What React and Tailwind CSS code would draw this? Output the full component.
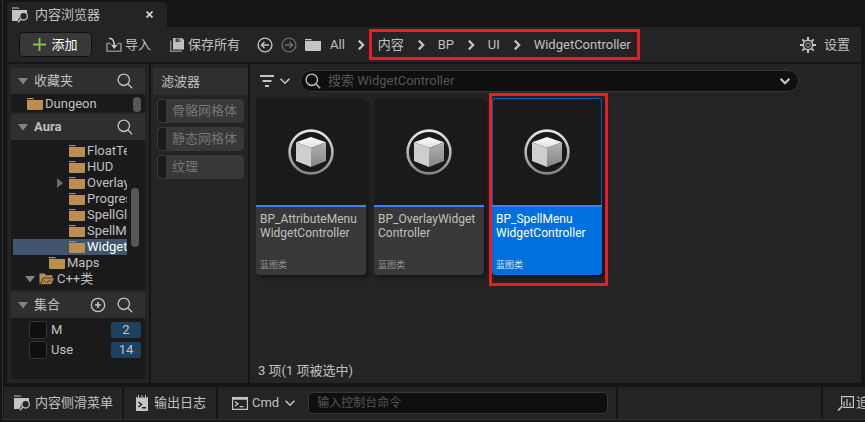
import React from "react";

const FONT =
  "font-['Roboto','Noto_Sans_CJK_SC',sans-serif] text-[13px] leading-4 text-[#c0c0c0]";

function Search({ className = "" }) {
  return (
    <svg className={`size-4 shrink-0 ${className}`} viewBox="0 0 16 16" fill="none" stroke="#c4c4c4" strokeWidth="1.3" aria-hidden="true">
      <circle cx="6.8" cy="6.8" r="5.7" />
      <path d="M11 11l4.2 4.2" />
    </svg>
  );
}

function BrowserIcon() {
  return (
    <svg className="h-4 w-[17px] shrink-0" viewBox="0 0 17 16" aria-hidden="true">
      <path d="M0 0h6l2 2H0z" fill="#777" />
      <path d="M0 3h15v3.6H11A4.4 4.4 0 0 0 7 11l-1.5 3H0z" fill="#c4c4c4" />
      <circle cx="11.6" cy="9.2" r="3.8" fill="#242424" stroke="#c4c4c4" strokeWidth="1.3" />
      <path d="M8.8 12L6 15.2" stroke="#c4c4c4" strokeWidth="1.4" />
    </svg>
  );
}

function ImportIcon() {
  return (
    <svg className="size-4 shrink-0" viewBox="0 0 16 16" fill="none" aria-hidden="true">
      <path d="M4.5 6.5H1V14.3h14V6.5h-3.5" stroke="#858585" strokeWidth="1.6" />
      <path d="M3.2 1.2C7 1.2 8.3 3.5 8.3 9.5" stroke="#d0d0d0" strokeWidth="1.6" />
      <path d="M4.8 7.2L8.3 12l3.5-4.8-3.5 1.4z" fill="#d0d0d0" />
    </svg>
  );
}

function SaveIcon() {
  return (
    <svg className="size-[14px] shrink-0" viewBox="0 0 14 14" aria-hidden="true">
      <path d="M.7 2.5v10.8H12" fill="none" stroke="#858585" strokeWidth="1.4" />
      <path d="M3 0h9l2 2v9.5H3z" fill="#c0c0c0" />
      <path d="M5.5 0.5h5v3.4h-5z" fill="#444" />
      <path d="M8.8 1h1v2.2h-1z" fill="#c0c0c0" />
    </svg>
  );
}

function ArrowCircle({ flip, color }) {
  return (
    <svg className={`size-4 ${flip ? "-scale-x-100" : ""}`} viewBox="0 0 16 16" fill="none" stroke={color} strokeWidth="1.4" aria-hidden="true">
      <circle cx="8" cy="8" r="6.9" />
      <path d="M12 8H5M7.5 5L4.5 8l3 3" strokeWidth="1.5" />
    </svg>
  );
}

function Folder({ color = "#b98e50" }) {
  return (
    <svg className="h-3 w-4 shrink-0" viewBox="0 0 16 12" fill={color} aria-hidden="true">
      <path d="M0 0h6l1.3 1.2H0zM0 2h16v9.3L15.3 12H.7L0 11.3z" />
    </svg>
  );
}

function OpenFolder() {
  return (
    <svg className="h-3 w-4 shrink-0" viewBox="0 0 16 12" aria-hidden="true">
      <path d="M.5 11.5V.5h5l1.5 1.8h6.5v3.2H4L1 11.5z" fill="#b98e50" />
      <path d="M1.2 11.5L4.2 5h11.3l-3.2 6.5z" fill="#b98e50" stroke="#1a1a1a" strokeWidth=".7" />
      <path d="M4 10l2-3.3M6 9.7l5-2.6M8 10.2l4.5-2.8" stroke="#5d4525" strokeWidth=".8" />
    </svg>
  );
}

function Chevron({ down, thin }) {
  return (
    <svg className={down ? "h-2 w-[10px] shrink-0" : "h-[10px] w-2 shrink-0"} viewBox={down ? "0 0 10 8" : "0 0 8 10"} fill="none" stroke="#c4c4c4" strokeWidth={thin ? 1.6 : 2.2} aria-hidden="true">
      <path d={down ? "M.6 1.8L5 6.2l4.4-4.4" : "M1.8 .6L6.2 5 1.8 9.4"} />
    </svg>
  );
}

function Triangle({ right }) {
  return (
    <svg className="size-[10px] shrink-0" viewBox="0 0 10 10" fill={right ? "#6a6a6a" : "#858585"} aria-hidden="true">
      <path d={right ? "M2 0l6 5-6 5z" : "M0 2h10L5 8.5z"} />
    </svg>
  );
}

function PanelHeader({ title, bold, children }) {
  return (
    <header className="flex h-[26px] shrink-0 items-center bg-[#2f2f2f] pr-3 pl-[7px]">
      <button className="flex flex-1 items-center gap-[6px] text-left">
        <Triangle />
        <span className={bold ? "font-bold" : ""}>{title}</span>
      </button>
      <div className="flex items-center gap-[11px]">{children}</div>
    </header>
  );
}

const tree = [
  { name: "FloatText", indent: "pl-[42px]" },
  { name: "HUD", indent: "pl-[42px]" },
  { name: "Overlay", indent: "pl-[42px]", closed: true },
  { name: "Progress", indent: "pl-[42px]" },
  { name: "SpellGlobe", indent: "pl-[42px]" },
  { name: "SpellMenu", indent: "pl-[42px]" },
  { name: "WidgetController", indent: "pl-[42px]", selected: true },
  { name: "Maps", indent: "pl-[22px]" },
  { name: "C++类", indent: "pl-3", open: true },
];

function TreeRow({ name, indent, closed, open, selected }) {
  return (
    <li>
      <button className={`flex h-4 w-full items-center gap-[2px] whitespace-nowrap ${indent} ${selected ? "bg-[#41566d] text-white" : ""}`}>
        <span className="flex w-3 shrink-0">
          {closed && <Triangle right />}
          {open && <Triangle />}
        </span>
        {open ? <OpenFolder /> : <Folder />}
        <span>{name}</span>
      </button>
    </li>
  );
}

function Collection({ id, name, count }) {
  return (
    <li className="flex h-5 items-center">
      <input id={id} type="checkbox" className="size-[18px] appearance-none rounded-[3px] border border-[#363636] bg-[#0f0f0f]" />
      <label htmlFor={id} className="flex-1 pl-[4px]">{name}</label>
      <span className="h-4 w-[30px] rounded-[2px] bg-[#1c425f] text-center">{count}</span>
    </li>
  );
}

function Cube({ id }) {
  return (
    <svg className="size-[46px]" viewBox="0 0 46 46" aria-hidden="true">
      <defs>
        <linearGradient id={`${id}r`} x1="0" y1="0" x2="0" y2="1">
          <stop offset="0" stopColor="#e6e6e6" />
          <stop offset="1" stopColor="#858585" />
        </linearGradient>
        <linearGradient id={`${id}s`} x1="0" y1="0" x2="0" y2="1">
          <stop offset="0" stopColor="#b2b2b2" />
          <stop offset="1" stopColor="#858585" />
        </linearGradient>
        <linearGradient id={`${id}t`} x1="0" y1="0" x2="0" y2="1">
          <stop offset="0" stopColor="#fff" />
          <stop offset="1" stopColor="#dedede" />
        </linearGradient>
      </defs>
      <circle cx="23" cy="23" r="21.4" fill="none" stroke={`url(#${id}r)`} strokeWidth="2.6" />
      <path d="M23 8l15 5.2L23 19 8 13.2z" fill={`url(#${id}t)`} />
      <path d="M8 13.2L23 19v19L8 32z" fill="#cecece" />
      <path d="M38 13.2L23 19v19l15-6z" fill={`url(#${id}s)`} />
    </svg>
  );
}

function AssetCard({ id, lines, selected }) {
  return (
    <li className="relative h-[177px] w-[110px] shrink-0">
      <button className={`flex size-full flex-col overflow-hidden rounded-[4px] text-left shadow-[3px_3px_4px_rgba(0,0,0,0.4)] ${selected ? "bg-[#0070e0] text-white" : "bg-[#383838]"}`}>
        <span className={`flex h-[107px] w-full items-center justify-center bg-[#1a1a1a] ${selected ? "rounded-t-[4px] border border-b-0 border-[#0060c0]" : ""}`}>
          <Cube id={id} />
        </span>
        <span className="h-[2px] w-full bg-[#4080ff]" />
        <span className="flex flex-1 flex-col justify-between pt-[5px] pb-[5px] pl-1 text-[12px] leading-[14px]">
          <span>{lines[0]}<br />{lines[1]}</span>
          <span className={`text-[9px] leading-[10px] ${selected ? "text-[#d5e7fa]" : "text-[#929292]"}`}>蓝图类</span>
        </span>
      </button>
      {selected && <span className="pointer-events-none absolute -top-[5px] -right-[6px] -bottom-[11px] -left-[3px] border-[3px] border-[#ed1c24]" />}
    </li>
  );
}

const CELL = "flex items-center bg-[#242424] whitespace-nowrap";

export default function App() {
  return (
    <div className={`${FONT} flex h-screen flex-col overflow-hidden bg-[#151515] pb-[2px] pl-[2px]`}>
      <div className="flex min-h-0 flex-1 flex-col border-b border-l border-[#333]">
        <main className="flex min-h-0 flex-1 flex-col pt-[2px] pr-1 pl-1">
          <div className="flex h-[25px] w-[160px] shrink-0 items-center rounded-t-[5px] bg-[#242424] pr-[14px] pl-[5px]">
            <BrowserIcon />
            <span className="flex-1 pl-[6px]">内容浏览器</span>
            <button aria-label="关闭">
              <svg className="size-[7px]" viewBox="0 0 7 7" stroke="#d0d0d0" strokeWidth="1.8" aria-hidden="true"><path d="M.5.5l6 6M6.5.5l-6 6" /></svg>
            </button>
          </div>

          <div className="flex h-[35px] shrink-0 items-center bg-[#242424] pr-[11px] pl-3 whitespace-nowrap">
            <button className="flex h-[25px] w-[73px] items-center justify-center gap-[5px] rounded-[4px] border border-[#101010] bg-[#383838] text-white">
              <svg className="size-[13px]" viewBox="0 0 13 13" stroke="#8bc24a" strokeWidth="1.8" aria-hidden="true"><path d="M6.5 0v13M0 6.5h13" /></svg>
              添加
            </button>
            <button className="ml-[14px] flex items-center gap-[3px]"><ImportIcon />导入</button>
            <button className="ml-[19px] flex items-center gap-[4px]"><SaveIcon />保存所有</button>
            <button className="ml-[17px]" aria-label="后退"><ArrowCircle color="#c4c4c4" /></button>
            <button className="ml-2" aria-label="前进"><ArrowCircle flip color="#6a6a6a" /></button>
            <button className="ml-2 flex items-center gap-[9px]"><Folder color="#c4c4c4" />All</button>
            <span className="mr-1 ml-3"><Chevron /></span>
            <nav className="flex h-[31px] w-[271px] items-center justify-between border-[3px] border-[#ed1c24] pr-[6px] pl-[6px]">
              <button>内容</button>
              <Chevron />
              <button>BP</button>
              <Chevron />
              <button>UI</button>
              <Chevron />
              <button>WidgetController</button>
            </nav>
            <button className="ml-auto flex items-center gap-2">
              <svg className="size-4" viewBox="0 0 16 16" fill="none" stroke="#c4c4c4" aria-hidden="true">
                <circle cx="8" cy="8" r="4.7" strokeWidth="1.5" />
                <circle cx="8" cy="8" r="2.2" stroke="#858585" strokeWidth="1.2" />
                <path d="M8 0v3M8 13v3M0 8h3M13 8h3M2.3 2.3l2.1 2.1M11.6 11.6l2.1 2.1M2.3 13.7l2.1-2.1M11.6 4.4l2.1-2.1" strokeWidth="1.9" />
              </svg>
              设置
            </button>
          </div>

          <div className="mt-[2px] flex min-h-0 flex-1 gap-[2px]">
            <aside className="flex w-[142px] shrink-0 flex-col gap-[2px] bg-[#242424] p-1">
              <section className="shrink-0">
                <PanelHeader title="收藏夹"><button aria-label="搜索收藏夹"><Search /></button></PanelHeader>
                <div className="flex h-[18px] items-center justify-between bg-[#1a1a1a] pt-[2px] pr-1 pl-4">
                  <button className="flex items-center gap-[2px]"><Folder />Dungeon</button>
                  <span className="h-[15px] w-2 rounded-full bg-[#575757]" />
                </div>
              </section>
              <section className="shrink-0">
                <PanelHeader title="Aura" bold><button aria-label="搜索文件夹"><Search /></button></PanelHeader>
                <div className="flex h-[150px] bg-[#1a1a1a] pt-[3px] pl-[2px]">
                  <ul className="w-[114px] overflow-hidden">
                    {tree.map((row) => <TreeRow key={row.name} {...row} />)}
                  </ul>
                  <span className="mt-[45px] ml-1 h-[59px] w-2 rounded-full bg-[#575757]" />
                </div>
              </section>
              <section className="flex min-h-0 flex-1 flex-col">
                <PanelHeader title="集合">
                  <button aria-label="添加集合">
                    <svg className="size-4" viewBox="0 0 16 16" fill="none" stroke="#c4c4c4" strokeWidth="1.3" aria-hidden="true"><circle cx="8" cy="8" r="6.7" /><path d="M8 5v6M5 8h6" strokeWidth="1.6" /></svg>
                  </button>
                  <button aria-label="搜索集合"><Search /></button>
                </PanelHeader>
                <ul className="flex-1 bg-[#1a1a1a] pt-[2px] pr-1 pl-[18px]">
                  <Collection id="m" name="M" count={2} />
                  <Collection id="use" name="Use" count={14} />
                </ul>
              </section>
            </aside>

            <aside className="w-[97px] shrink-0 bg-[#242424] pt-1 pl-[2px]">
              <h2 className="flex h-[27px] items-center bg-[#2f2f2f] pl-2">滤波器</h2>
              <div className="flex flex-col gap-1 pt-1 pr-1 pl-1">
                {["骨骼网格体", "静态网格体", "纹理"].map((name) => (
                  <button key={name} className="flex h-6 items-stretch overflow-hidden rounded-[4px] border border-[#383838] bg-[#383838] text-[#757575]">
                    <span className="w-2 shrink-0 rounded-l-[4px] bg-[#1a1a1a]" />
                    <span className="self-center pl-[6px] whitespace-nowrap">{name}</span>
                  </button>
                ))}
              </div>
            </aside>

            <section className="flex min-w-0 flex-1 flex-col bg-[#242424] pt-[6px] pl-[6px]">
              <div className="flex h-[22px] items-center pr-[62px] pl-1">
                <button className="flex items-center gap-[6px]" aria-label="筛选">
                  <svg className="h-3 w-[14px]" viewBox="0 0 14 12" stroke="#c4c4c4" strokeWidth="1.8" aria-hidden="true"><path d="M0 1h14M2.5 6h9M5 11h4" /></svg>
                  <Chevron down thin />
                </button>
                <label className="ml-[10px] flex h-[22px] flex-1 items-center rounded-full border border-[#363636] bg-[#0f0f0f] pr-2 pl-1">
                  <Search />
                  <input type="search" aria-label="搜索" placeholder="搜索 WidgetController" className="min-w-0 flex-1 bg-transparent pl-[7px] outline-none placeholder:text-[#555]" />
                  <Chevron down />
                </label>
              </div>
              <ul className="flex gap-2 pt-[6px]">
                <AssetCard id="attr" lines={["BP_AttributeMenu", "WidgetController"]} />
                <AssetCard id="over" lines={["BP_OverlayWidget", "Controller"]} />
                <AssetCard id="spell" lines={["BP_SpellMenu", "WidgetController"]} selected />
              </ul>
              <p className="mt-auto pb-1 pl-[2px]">3 项(1 项被选中)</p>
            </section>
          </div>
        </main>

        <footer className="mt-1 flex h-8 shrink-0 gap-[2px] pl-px">
          <button className={`${CELL} w-[118px] gap-1 pl-[10px]`}><BrowserIcon />内容侧滑菜单</button>
          <button className={`${CELL} w-[92px] gap-[6px] pl-3`}>
            <svg className="h-4 w-3" viewBox="0 0 12 16" aria-hidden="true">
              <path d="M0 2h12v14H0z" fill="#c4c4c4" />
              <path d="M2.5 0v3M6 0v3M9.5 0v3" stroke="#242424" strokeWidth="2.4" />
              <path d="M2.5 0v3M6 0v3M9.5 0v3" stroke="#c4c4c4" strokeWidth="1" />
              <path d="M2.5 7l3 2.5-3 2.5M6 12.8h4" stroke="#202020" strokeWidth="1.4" fill="none" />
            </svg>
            输出日志
          </button>
          <div className={`${CELL} w-[398px] pr-2 pl-[14px]`}>
            <button className="flex items-center gap-1">
              <svg className="h-[13px] w-4" viewBox="0 0 16 13" fill="none" stroke="#c4c4c4" aria-hidden="true">
                <path d="M.6.6h14.8v11.8H.6z" strokeWidth="1.2" /><path d="M0 1.5h16" strokeWidth="2.5" /><path d="M3 4.5l3 2.3-3 2.3M7.5 9.6h4" strokeWidth="1.3" />
              </svg>
              Cmd
              <span className="pl-[2px]"><Chevron down thin /></span>
            </button>
            <input aria-label="控制台命令" placeholder="输入控制台命令" className="ml-[13px] h-[22px] min-w-0 flex-1 rounded-[4px] border border-[#363636] bg-[#0f0f0f] px-2 text-[12px] outline-none placeholder:text-[#555]" />
          </div>
          <div className={`${CELL} flex-1`} />
          <button className={`${CELL} w-[42px] gap-[2px] overflow-hidden pl-[15px]`}>
            <svg className="size-4 shrink-0" viewBox="0 0 16 16" fill="none" aria-hidden="true">
              <path d="M3.6 10V1.6h11.8v10.8H5" stroke="#c4c4c4" strokeWidth="1.2" /><path d="M6 11V6.5M9 11V4M12 11V7.5" stroke="#858585" strokeWidth="2" /><path d="M0 15.5l4.5-4.5" stroke="#c4c4c4" strokeWidth="1.7" />
            </svg>
            追踪
          </button>
        </footer>
      </div>
    </div>
  );
}
